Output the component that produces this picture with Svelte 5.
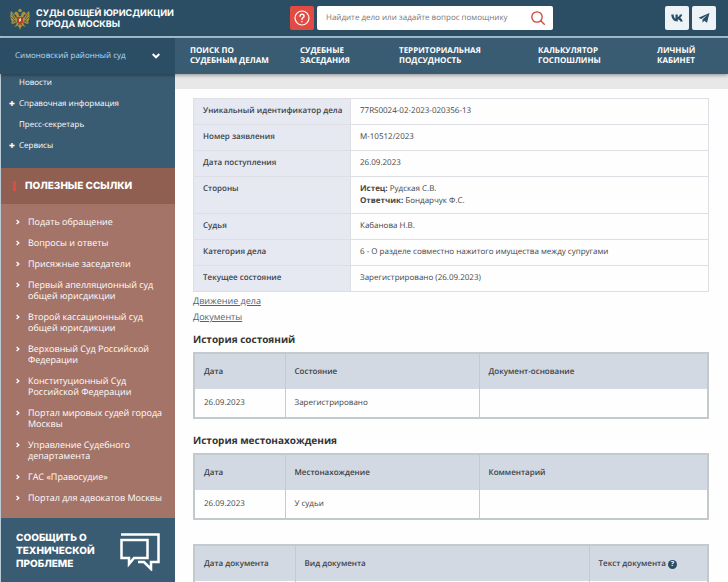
<script>
    const menu = [
        { text: "Поиск по судебным делам", lines: ["Поиск по", "судебным делам"] },
        { text: "Судебные заседания", lines: ["Судебные", "заседания"] },
        { text: "Территориальная подсудность", lines: ["Территориальная", "подсудность"] },
        { text: "Калькулятор госпошлины", lines: ["Калькулятор", "госпошлины"] },
        { text: "Личный кабинет", lines: ["Личный", "кабинет"] },
    ];

    const sections = [
        { text: "Новости" },
        { text: "Справочная информация", nested: true },
        { text: "Пресс-секретарь" },
        { text: "Сервисы", nested: true },
    ];

    const links = [
        "Подать обращение",
        "Вопросы и ответы",
        "Присяжные заседатели",
        "Первый апелляционный суд общей юрисдикции",
        "Второй кассационный суд общей юрисдикции",
        "Верховный Суд Российской Федерации",
        "Конституционный Суд Российской Федерации",
        "Портал мировых судей города Москвы",
        "Управление Судебного департамента",
        "ГАС «Правосудие»",
        "Портал для адвокатов Москвы",
    ];

    const details = [
        ["Уникальный идентификатор дела", "77RS0024-02-2023-020356-13"],
        ["Номер заявления", "М-10512/2023"],
        ["Дата поступления", "26.09.2023"],
        ["Стороны", null],
        ["Судья", "Кабанова Н.В."],
        ["Категория дела", "6 - О разделе совместно нажитого имущества между супругами"],
        ["Текущее состояние", "Зарегистрировано (26.09.2023)"],
    ];

    const parties = [
        ["Истец:", "Рудская С.В."],
        ["Ответчик:", "Бондарчук Ф.С."],
    ];

    const histories = [
        {
            title: "История состояний",
            head: ["Дата", "Состояние", "Документ-основание"],
            rows: [["26.09.2023", "Зарегистрировано", ""]],
        },
        {
            title: "История местонахождения",
            head: ["Дата", "Местонахождение", "Комментарий"],
            rows: [["26.09.2023", "У судьи", ""]],
        },
    ];

    let query = $state("");
</script>

<div class="page">
    <header class="top">
        <a class="brand" href="#home">
            <svg class="emblem" viewBox="0 0 20 21" aria-hidden="true">
                <g fill="#a8913f">
                    <path d="M9 0h2l1 2-1 1H9L8 2z" />
                    <path d="M9 7C9 4 7 2 5 3L4 5l2 1 1 3C5 9 4 4 1 2c-1 3-1 8 1 11l-1 1 2 1 4-2-1 3-2 2 3-1 2 1 1 3 1-3 2-1 3 1-2-2-1-3 4 2 2-1-1-1c2-3 2-8 1-11-3 2-4 7-6 7l1-3 2-1-1-2c-2-1-4 1-4 4z" />
                </g>
                <path d="M2 5l3 5M1 8l4 4M18 5l-3 5M19 8l-4 4M3 13l3-1M17 13l-3-1M7 18l2-3M13 18l-2-3" stroke="#4f5333" stroke-width=".8" fill="none" />
                <path d="M7 8h6v5l-3 3-3-3z" fill="#b63d2d" />
                <path d="M9 10l2-1v3l-2 1z" fill="#e5d9bd" />
            </svg>
            <span>Суды общей юрисдикции<br />города Москвы</span>
        </a>
        <form class="search" onsubmit={(e) => e.preventDefault()}>
            <button type="button" class="help" aria-label="Помощь">
                <svg viewBox="0 0 16 16" fill="none" stroke="#fff" stroke-linecap="round">
                    <circle cx="8" cy="8" r="7" stroke-width="1.2" />
                    <path d="M6 6.3c0-2.7 4.1-2.6 4.1 0C10.100 7.700 8 7.700 8 9.300M8 11.500v.2" stroke-width="1.400" />
                </svg>
            </button>
            <div class="field">
                <input
                    type="text"
                    aria-label="Поиск"
                    placeholder="Найдите дело или задайте вопрос помощнику"
                    bind:value={query}
                />
                <button type="submit" class="find" aria-label="Найти">
                    <svg viewBox="0 0 14 14" fill="none" stroke="#c9443a" stroke-width="1.3" stroke-linecap="round">
                        <circle cx="6" cy="6" r="5.200" />
                        <path d="M9.700 9.700l3.600 3.600" />
                    </svg>
                </button>
            </div>
        </form>
        <div class="social">
            <a href="#vk" aria-label="ВКонтакте">
                <svg viewBox="0 0 24 24" fill="#2b4e64">
                    <path d="M13 19C5.500 19 1 13.400.5 5h4.800c.1 5 2 7.500 3.700 8.300V5h4.500v4.800c2-.2 3.700-2.500 4.500-4.800h4.500c-.6 3.300-2.700 5.500-4.200 6.700 1.700.9 4.100 3.200 5.200 7.300H18.500c-.8-2.300-2.600-4-5-4.300V19z" />
                </svg>
            </a>
            <a href="#telegram" aria-label="Telegram">
                <svg viewBox="0 0 24 24" fill="#2b4e64">
                    <path d="M23 2L1 11.500l5.500 2.300L18.500 6 9 15v6.500l3.500-4.200 5.500 4z" />
                </svg>
            </a>
        </div>
    </header>

    <div class="bar">
        <button class="court">
            Симоновский районный суд
            <svg viewBox="0 0 8 6" fill="none" stroke="#fff" stroke-width="2"><path d="M.7 1L4 4.300 7.300 1" /></svg>
        </button>
        <nav class="menu">
            {#each menu as item}
                <a href="#menu" aria-label={item.text}>{item.lines[0]}<br />{item.lines[1]}</a>
            {/each}
        </nav>
    </div>

    <div class="columns">
        <aside>
            <ul class="sections">
                {#each sections as section}
                    <li class:nested={section.nested}><a href="#section">{section.text}</a></li>
                {/each}
            </ul>
            <h2>Полезные ссылки</h2>
            <ul class="links">
                {#each links as link}
                    <li>
                        <svg viewBox="0 0 4 6" fill="none" stroke="#fff" stroke-width="1.300"><path d="M.6 1L2.800 3 .6 5" /></svg>
                        <a href="#link">{link}</a>
                    </li>
                {/each}
            </ul>
            <a class="report" href="#report">
                <span>Сообщить о технической проблеме</span>
                <svg viewBox="0 0 40 38" fill="none" stroke="#fff" stroke-width="2.500">
                    <path d="M1.500 7h26v18H14l-5 6v-6H1.500z" />
                    <path d="M1 1.500h37.500V29H31v7l-7-7h-6" />
                </svg>
            </a>
        </aside>

        <main>
            <table class="details">
                <tbody>
                    {#each details as [label, value]}
                        <tr>
                            <th scope="row">{label}</th>
                            <td>
                                {#if value}
                                    {value}
                                {:else}
                                    {#each parties as [role, person]}
                                        <div><b>{role}</b> {person}</div>
                                    {/each}
                                {/if}
                            </td>
                        </tr>
                    {/each}
                </tbody>
            </table>

            <div class="anchors">
                <a href="#moves">Движение дела</a>
                <a href="#documents">Документы</a>
            </div>

            {#each histories as history}
                <h3>{history.title}</h3>
                <table class="grid">
                    <colgroup><col class="date" /><col class="state" /><col /></colgroup>
                    <thead>
                        <tr>
                            {#each history.head as cell}<th>{cell}</th>{/each}
                        </tr>
                    </thead>
                    <tbody>
                        {#each history.rows as row}
                            <tr>
                                {#each row as cell}<td>{cell}</td>{/each}
                            </tr>
                        {/each}
                    </tbody>
                </table>
            {/each}

            <table class="grid documents">
                <colgroup><col class="doc-date" /><col class="doc-kind" /><col /></colgroup>
                <thead>
                    <tr>
                        <th>Дата документа</th>
                        <th>Вид документа</th>
                        <th>Текст документа <span class="hint">?</span></th>
                    </tr>
                </thead>
                <tbody>
                    <tr><td></td><td></td><td></td></tr>
                </tbody>
            </table>
        </main>
    </div>
</div>

<style>
    :global(body) {
        margin: 0;
    }
    * {
        box-sizing: border-box;
    }
    .page {
        display: flex;
        flex-direction: column;
        height: 100vh;
        overflow: hidden;
        background: #fefefe;
        color: #444;
        font: 8px/12px "Open Sans", "Noto Sans", sans-serif;
        text-rendering: geometricPrecision;
    }
    a {
        color: inherit;
        text-decoration: none;
    }
    button {
        padding: 0;
        border: 0;
        font: inherit;
        cursor: pointer;
    }
    ul,
    h2,
    h3 {
        margin: 0;
        padding: 0;
        list-style: none;
    }
    svg {
        display: block;
        flex: none;
    }

    .top {
        flex: none;
        display: flex;
        align-items: center;
        height: 38px;
        padding: 0 12px 0 10px;
        background: #2b4e64;
        border-bottom: 2px solid #a9c6d4;
        color: #fff;
    }
    .brand {
        display: flex;
        align-items: center;
        gap: 6px;
        width: 280px;
        padding-top: 2px;
        font: 700 9px/11px Inter, "Open Sans", sans-serif;
        text-transform: uppercase;
    }
    .emblem {
        width: 20px;
        height: 21px;
    }
    .search {
        display: flex;
        gap: 3px;
    }
    .help {
        display: grid;
        place-items: center;
        width: 24px;
        height: 24px;
        border-radius: 2px;
        background: #e24b43;
    }
    .help svg {
        width: 16px;
        height: 16px;
    }
    .field {
        display: flex;
        align-items: center;
        width: 236px;
        padding: 0 8px 0 9px;
        border-radius: 2px;
        background: #fff;
    }
    .field input {
        flex: 1;
        min-width: 0;
        padding: 0;
        border: 0;
        outline: 0;
        background: none;
        font: 8px/12px "Open Sans", sans-serif;
        text-rendering: inherit;
    }
    .field input::placeholder {
        color: #777;
        opacity: 1;
    }
    .find {
        background: none;
    }
    .find svg {
        width: 14px;
        height: 14px;
    }
    .social {
        display: flex;
        gap: 3px;
        margin-left: auto;
    }
    .social a {
        display: grid;
        place-items: center;
        width: 24px;
        height: 24px;
        border-radius: 2px;
        background: #edf3f7;
    }
    .social svg {
        width: 12px;
        height: 12px;
    }

    .bar {
        flex: none;
        display: flex;
        height: 36px;
        background: #3a5c73;
        box-shadow: 0 1px 4px rgba(0, 0, 0, 0.4);
        position: relative;
        z-index: 1;
    }
    .court {
        display: flex;
        align-items: center;
        justify-content: space-between;
        width: 175px;
        padding: 0 15px;
        background: #2b4e64;
        color: #b3dcfa;
        font-weight: 500;
        text-rendering: inherit;
    }
    .court svg {
        width: 8px;
        height: 6px;
    }
    .menu {
        flex: 1;
        display: grid;
        grid-template-columns: 110fr 99fr 139fr 119fr 71fr;
        align-items: center;
        padding-left: 15px;
        color: #fff;
        font-weight: 700;
        line-height: 10px;
        text-transform: uppercase;
        white-space: nowrap;
    }

    .columns {
        flex: 1;
        display: flex;
        min-height: 0;
    }
    aside {
        flex: none;
        width: 175px;
        border-left: 1px solid #b9cbd6;
        background: #3a5c73;
        color: #fff;
    }
    .sections {
        padding: 3px 0 7px 18px;
        line-height: 11px;
        font-weight: 500;
    }
    .sections li {
        padding-bottom: 10px;
    }
    .nested::before {
        content: "+";
        float: left;
        width: 10px;
        margin-left: -10px;
        font-size: 10px;
        font-weight: 800;
    }
    h2 {
        display: flex;
        align-items: center;
        height: 36px;
        padding-left: 12px;
        background: #905f51;
        font: 800 10px/12px Inter, "Open Sans", sans-serif;
        text-transform: uppercase;
    }
    h2::before {
        content: "";
        width: 3px;
        height: 10px;
        margin-right: 9px;
        background: #e24b3b;
    }
    .links {
        padding: 12px 8px 5px 15px;
        background: #a57468;
        font-size: 9px;
        line-height: 11px;
    }
    .links li {
        display: flex;
        gap: 8px;
        padding-bottom: 10px;
    }
    .links svg {
        width: 4px;
        height: 6px;
        margin-top: 3px;
    }
    .report {
        display: flex;
        justify-content: space-between;
        align-items: center;
        padding: 14px 15px;
        font: 800 10px/13px Inter, "Open Sans", sans-serif;
        text-transform: uppercase;
    }
    .report span {
        width: 90px;
    }
    .report svg {
        width: 40px;
        height: 38px;
    }

    main {
        flex: 1;
        min-width: 0;
        padding: 9px 19px 0 18px;
        border-top: 15px solid #e8e8e8;
    }
    table {
        width: 100%;
        border-collapse: collapse;
        table-layout: fixed;
    }
    th {
        color: #3d4246;
        font-weight: 600;
        text-align: left;
        white-space: nowrap;
    }
    .details th,
    .details td {
        padding: 6px 9px;
        border: 1px solid #dedfe4;
        vertical-align: top;
    }
    .details th {
        width: 157px;
        padding-bottom: 7px;
        background: #e6e9f2;
    }
    b {
        font-weight: 700;
    }
    .anchors {
        display: flex;
        flex-direction: column;
        align-items: flex-start;
        gap: 4px;
        padding-top: 3px;
        color: #4d6473;
        font-size: 9px;
    }
    .anchors a {
        text-decoration: underline;
    }
    h3 {
        padding: 9px 0 6px;
        color: #333;
        font-size: 10px;
        font-weight: 700;
        line-height: 14px;
    }
    .grid {
        margin-bottom: 5px;
        border: 2px solid #c3cace;
    }
    .grid th,
    .grid td {
        height: 29px;
        padding: 0 9px;
        border-left: 1px solid #c2cbd1;
    }
    .grid th {
        height: 36px;
        background: #d2d9e3;
    }
    .date {
        width: 91px;
    }
    .state {
        width: 194px;
    }
    .documents {
        margin-top: 24px;
    }
    .doc-date {
        width: 101px;
    }
    .doc-kind {
        width: 294px;
    }
    .hint {
        display: inline-block;
        width: 9px;
        height: 9px;
        border-radius: 50%;
        background: #2b4e64;
        color: #fff;
        font-size: 7px;
        font-weight: 700;
        line-height: 9px;
        text-align: center;
    }
</style>
